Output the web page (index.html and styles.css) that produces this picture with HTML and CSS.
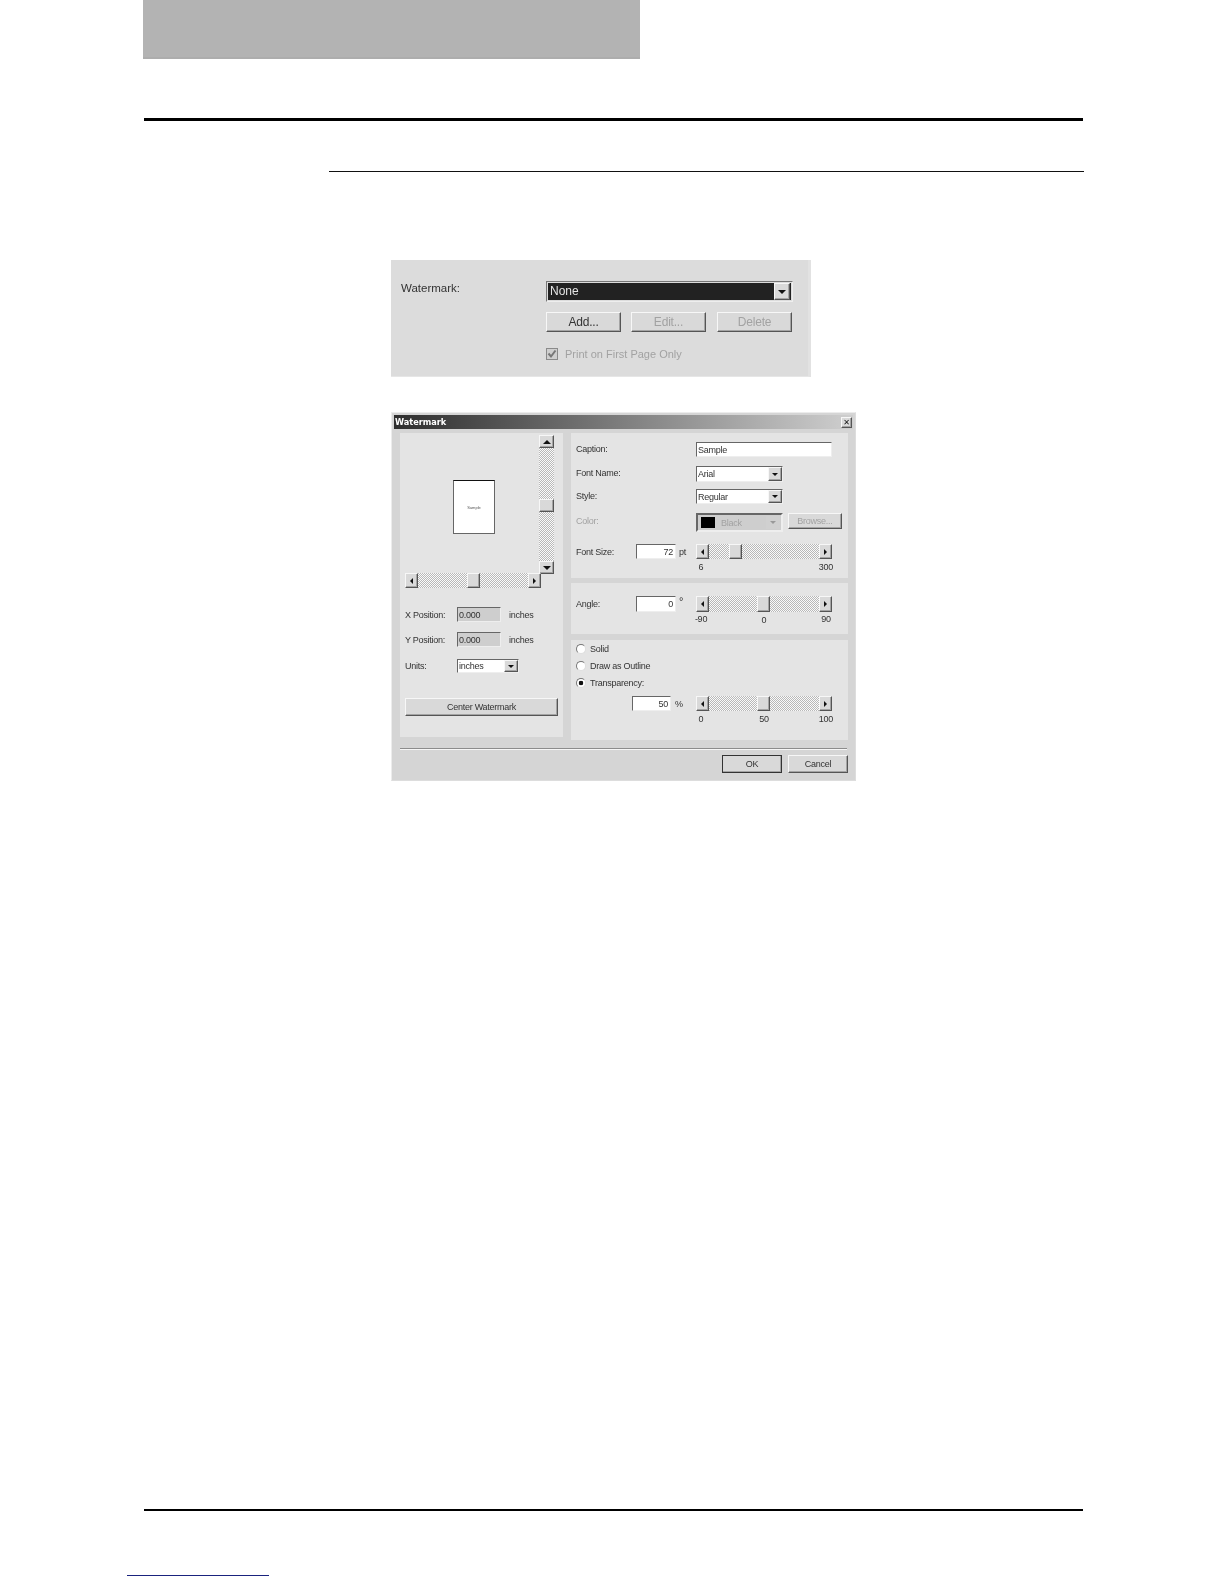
FILE: index.html
```html
<!DOCTYPE html>
<html lang="en">
<head>
<meta charset="utf-8">
<title>Watermark</title>
<link rel="stylesheet" href="styles.css">
</head>
<body>
<header class="band"></header>
<hr class="rule-main">
<hr class="rule-sub">

<section class="shot">
  <div class="shot-label">Watermark:</div>
  <div class="shot-controls">
    <div class="combo"><span class="combo-value">None</span><span class="btn arrow-box"><i class="arrow down"></i></span></div>
    <div class="shot-buttons">
      <span class="btn shot-btn">Add...</span>
      <span class="btn shot-btn off">Edit...</span>
      <span class="btn shot-btn off gap-wide">Delete</span>
    </div>
    <div class="shot-check">
      <svg class="check" viewBox="0 0 12 12"><rect x=".5" y=".5" width="11" height="11" fill="#cfcfcf" stroke="#8a8a8a"/><path d="M2.5 5.5l2.5 3 4.5-6" fill="none" stroke="#777" stroke-width="2"/></svg>
      <span class="off">Print on First Page Only</span>
    </div>
  </div>
</section>

<section class="dialog">
  <div class="titlebar"><span>Watermark</span><span class="btn close">&#10005;</span></div>
  <div class="dialog-body">
    <div class="panel col-left">
      <div class="preview-row">
        <div class="preview"><div class="sheet"><span>Sample</span></div></div>
        <div class="vscroll">
          <span class="btn sb-v"><i class="arrow up"></i></span>
          <i class="track t-v1"></i>
          <span class="btn thumb-v"></span>
          <i class="track grow"></i>
          <span class="btn sb-v"><i class="arrow down"></i></span>
        </div>
      </div>
      <div class="hscroll">
        <span class="btn sb-h"><i class="arrow left"></i></span>
        <i class="track t-h1"></i>
        <span class="btn thumb-h"></span>
        <i class="track grow"></i>
        <span class="btn sb-h"><i class="arrow right"></i></span>
      </div>
      <div class="row pos first"><span class="lbl-pos">X Position:</span><span class="field dis w44">0.000</span><span class="unit">inches</span></div>
      <div class="row pos second"><span class="lbl-pos">Y Position:</span><span class="field dis w44">0.000</span><span class="unit">inches</span></div>
      <div class="row units"><span class="lbl-pos">Units:</span><span class="field sel w62">inches<span class="btn arrow-small"><i class="arrow down"></i></span></span></div>
      <span class="btn center-btn">Center Watermark</span>
    </div>

    <div class="col-right">
      <div class="panel a">
        <div class="row h15"><span class="lbl">Caption:</span><span class="field w136">Sample</span></div>
        <div class="row h16 m9"><span class="lbl">Font Name:</span><span class="field sel w87">Arial<span class="btn arrow-small"><i class="arrow down"></i></span></span></div>
        <div class="row h15 m7"><span class="lbl">Style:</span><span class="field sel w87">Regular<span class="btn arrow-small"><i class="arrow down"></i></span></span></div>
        <div class="row h19 m9 top"><span class="lbl off lbl-mid">Color:</span><span class="field sel dis w87 color-sel"><b class="swatch"></b><span class="off">Black</span><span class="btn arrow-small flat"><i class="arrow down dim"></i></span></span><span class="btn browse off">Browse...</span></div>
        <div class="row h15 m12"><span class="lbl-short">Font Size:</span><span class="field num w40">72</span><span class="suffix">pt</span>
          <div class="slider"><span class="btn sb-h"><i class="arrow left"></i></span><i class="track t-s1"></i><span class="btn thumb-s"></span><i class="track grow"></i><span class="btn sb-h"><i class="arrow right"></i></span></div>
        </div>
        <div class="ticks"><span>6</span><span></span><span>300</span></div>
      </div>
      <div class="panel b">
        <div class="row h16"><span class="lbl-short">Angle:</span><span class="field num w40">0</span><span class="suffix degree">&#176;</span>
          <div class="slider"><span class="btn sb-h"><i class="arrow left"></i></span><i class="track t-s2"></i><span class="btn thumb-s"></span><i class="track grow"></i><span class="btn sb-h"><i class="arrow right"></i></span></div>
        </div>
        <div class="ticks t2"><span>-90</span><span class="low">0</span><span>90</span></div>
      </div>
      <div class="panel c">
        <div class="radio-row"><i class="radio"></i>Solid</div>
        <div class="radio-row m5"><i class="radio"></i>Draw as Outline</div>
        <div class="radio-row m5"><i class="radio on"></i>Transparency:</div>
        <div class="row h15 m7 indent"><span class="field num w39">50</span><span class="suffix pct">%</span>
          <div class="slider"><span class="btn sb-h"><i class="arrow left"></i></span><i class="track t-s2"></i><span class="btn thumb-s"></span><i class="track grow"></i><span class="btn sb-h"><i class="arrow right"></i></span></div>
        </div>
        <div class="ticks"><span>0</span><span class="mid">50</span><span>100</span></div>
      </div>
    </div>
  </div>
  <div class="separator"></div>
  <div class="dialog-foot">
    <span class="btn foot-btn default">OK</span>
    <span class="btn foot-btn">Cancel</span>
  </div>
</section>

<footer class="foot">
  <hr class="rule-foot">
  <div class="foot-link"></div>
</footer>
</body>
</html>
```

FILE: styles.css
```css
* { box-sizing: border-box; }
html, body { margin: 0; padding: 0; background: #fff; }
body { height: 1584px; overflow: hidden; font-family: "Liberation Sans", Arial, sans-serif; color: #333; }
hr { border: 0; margin: 0; }

.band { width: 497px; height: 59px; margin-left: 143px; background: #b3b3b3; border-bottom: 2px solid #adadad; }
.rule-main { width: 939px; height: 3px; margin: 59px 0 0 144px; background: #000; }
.rule-sub { width: 755px; height: 1px; margin: 50px 0 0 329px; background: #111; }

/* shared win95 bits */
.btn { display: flex; align-items: center; justify-content: center; flex: none; background: #d9d9d9;
  border-top: 1px solid #f7f7f7; border-left: 1px solid #f7f7f7; border-right: 1px solid #555; border-bottom: 1px solid #555;
  box-shadow: inset -1px -1px 0 #a4a4a4; }
.off { color: #a2a2a2; }
.arrow { display: block; width: 0; height: 0; border-style: solid; border-color: transparent; }
.arrow.down { border-width: 4px 4px 0; border-top-color: #111; }
.arrow.up { border-width: 0 4px 4px; border-bottom-color: #111; }
.arrow.left { border-width: 3px 3px 3px 0; border-right-color: #111; }
.arrow.right { border-width: 3px 0 3px 3px; border-left-color: #111; }
.arrow.dim { border-top-color: #999; }
.track { display: block; flex: none; background: repeating-conic-gradient(#fafafa 0 25%, #b8b8b8 0 50%) 0 0 / 2px 2px; }
.grow { flex: 1; }

/* upper screenshot */
.shot { display: flex; width: 420px; height: 117px; margin: 88px 0 0 391px; padding: 21px 0 0 10px;
  background: #dcdcdc; border-right: 3px solid #e2e2e2; border-bottom: 1px solid #e6e6e6; font-size: 11.5px; filter: blur(.4px); }
.shot-label { width: 145px; line-height: 14px; }
.shot-controls { width: 247px; }
.combo { display: flex; height: 21px; padding: 2px; background: #222; border: 1px solid #777; border-right-color: #eee; border-bottom-color: #eee; outline: 1px solid #dcdcdc; outline-offset: -2px; }
.combo-value { flex: 1; padding-left: 1px; color: #e4e4e4; line-height: 15px; font-size: 12px; }
.arrow-box { width: 16px; margin: -1px 0 -1px 0; }
.shot-buttons { display: flex; gap: 10px; margin-top: 10px; }
.shot-btn { width: 75px; height: 20px; font-size: 12px; letter-spacing: -.2px; }
.gap-wide { margin-left: 1px; }
.shot-check { display: flex; align-items: center; gap: 7px; margin-top: 16px; font-size: 11px; }
.check { width: 12px; height: 12px; flex: none; }

/* dialog */
.dialog { width: 465px; height: 369px; margin: 35px 0 0 391px; padding: 2px 2px 0; background: #d5d5d5;
  border: 1px solid #ececec; border-right-color: #ddd; border-bottom-color: #ddd;
  font-size: 9px; letter-spacing: -.25px; filter: blur(.4px); }
.titlebar { display: flex; align-items: center; justify-content: space-between; height: 14px; padding: 0 1px;
  background: linear-gradient(90deg, #2e2e2e, #cfcfcf); color: #fff; font: bold 8.2px "DejaVu Sans", sans-serif; letter-spacing: 0; }
.close { width: 11px; height: 11px; font: bold 8px "DejaVu Sans", sans-serif; color: #111; }
.dialog-body { display: flex; gap: 8px; margin: 4px 0 0 6px; }
.panel { background: #e4e4e4; }
.col-left { width: 163px; height: 304px; padding: 2px 0 0 5px; }
.col-right { display: flex; flex-direction: column; width: 277px; height: 307px; }

.preview-row { display: flex; }
.preview { width: 134px; height: 139px; padding: 45px 0 0 48px; }
.sheet { display: flex; align-items: center; justify-content: center; width: 42px; height: 54px; background: #fff;
  border: 1px solid #666; border-top: 1px solid #111; font-size: 4px; letter-spacing: 0; color: #555; }
.vscroll { display: flex; flex-direction: column; width: 15px; height: 139px; }
.sb-v { width: 15px; height: 13px; }
.vscroll .track { width: 15px; }
.t-v1 { height: 51px; }
.thumb-v { width: 15px; height: 13px; }
.hscroll { display: flex; width: 136px; height: 15px; margin-top: -1px; }
.sb-h { width: 13px; height: 100%; }
.hscroll .track, .slider .track { height: 100%; }
.t-h1 { width: 49px; }
.thumb-h { width: 13px; height: 100%; }

.row { display: flex; align-items: center; }
.pos { height: 15px; }
.first { margin-top: 19px; }
.second { margin-top: 10px; }
.units { height: 14px; margin-top: 12px; }
.lbl-pos { width: 52px; }
.unit { margin-left: 8px; }
.center-btn { width: 153px; height: 18px; margin-top: 25px; }

.field { display: flex; align-items: center; height: 100%; padding-left: 1px; flex: none; background: #fff; white-space: nowrap;
  border: 1px solid #eee; border-top-color: #666; border-left-color: #666; }
.field.dis { background: #cecece; }
.num { justify-content: flex-end; padding-right: 2px; }
.sel .btn { margin-left: auto; }
.arrow-small { width: 14px; height: 100%; }
.arrow-small .arrow { border-width: 3px 3px 0; }
.flat { background: #d0d0d0; border-color: #d0d0d0; box-shadow: none; }
.w39 { width: 39px; } .w40 { width: 40px; } .w44 { width: 44px; } .w62 { width: 62px; } .w87 { width: 87px; } .w136 { width: 136px; }

.a { height: 145px; padding: 9px 0 0 5px; }
.b { height: 51px; margin-top: 5px; padding: 13px 0 0 5px; }
.c { height: 100px; margin-top: 6px; padding: 3px 0 0 5px; }
.h15 { height: 15px; } .h16 { height: 16px; } .h19 { height: 19px; }
.m5 { margin-top: 5px; } .m7 { margin-top: 7px; } .m9 { margin-top: 9px; } .m12 { margin-top: 12px; }
.top { align-items: flex-start; }
.lbl { width: 120px; position: relative; top: -1px; }
.lbl-mid { align-self: center; margin-top: -1px; }
.lbl-short { width: 60px; }
.suffix { width: 20px; padding-left: 3px; flex: none; }
.degree { align-self: flex-start; font-size: 11px; line-height: 10px; padding-left: 3px; }
.pct { width: 25px; padding-left: 4px; }
.indent { margin-left: 56px; }
.color-sel { padding: 1px; border-width: 2px; }
.swatch { display: block; width: 14px; height: 11px; margin: 0 6px 0 2px; background: #000; }
.browse { width: 54px; height: 16px; margin-left: 5px; }
.slider { display: flex; width: 136px; height: 100%; flex: none; }
.t-s1 { width: 20px; }
.t-s2 { width: 48px; }
.thumb-s { width: 13px; height: 100%; }
.ticks { display: grid; grid-template-columns: 10px 1fr 12px; width: 136px; height: 10px; margin: 3px 0 0 120px; line-height: 10px; }
.ticks span { justify-self: center; white-space: nowrap; }
.t2 { margin-top: 2px; }
.low { position: relative; top: 1px; left: 1px; }
.mid { position: relative; left: 1px; }

.radio-row { display: flex; align-items: center; height: 12px; }
.radio { display: block; width: 10px; height: 10px; margin-right: 4px; border-radius: 50%; background: #fff;
  border: 1px solid #777; border-right-color: #ddd; border-bottom-color: #ddd; }
.radio.on { background: radial-gradient(circle, #111 0 2px, #fff 2.6px); }

.separator { width: 447px; height: 2px; margin: 8px 0 0 6px; border-top: 1px solid #8c8c8c; border-bottom: 1px solid #f6f6f6; }
.dialog-foot { display: flex; gap: 6px; justify-content: flex-end; margin: 5px 5px 0 0; }
.foot-btn { width: 60px; height: 18px; }
.default { outline: 1px solid #333; outline-offset: -1px; }

/* footer */
.foot { margin-top: 728px; }
.rule-foot { width: 939px; height: 2px; margin-left: 144px; background: #000; }
.foot-link { width: 142px; height: 1px; margin: 64px 0 0 127px; background: #1a237e; }
```
